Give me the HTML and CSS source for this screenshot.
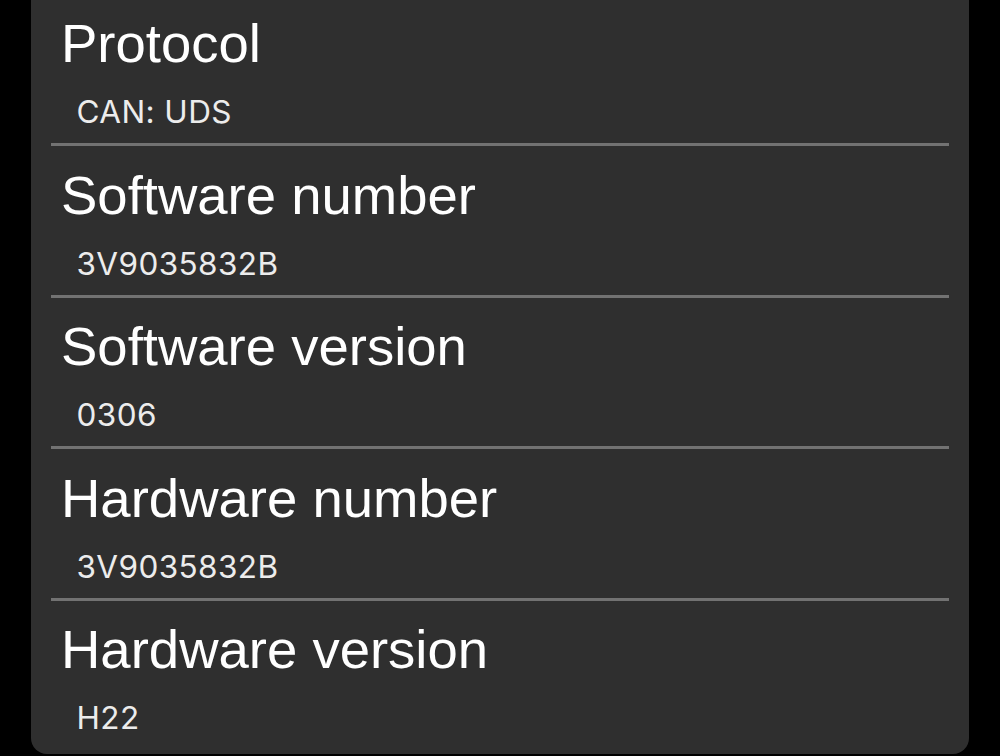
FILE: index.html
```html
<!DOCTYPE html>
<html lang="en">
<head>
<meta charset="utf-8">
<title>ECU info</title>
<link rel="stylesheet" href="styles.css">
</head>
<body>
<div class="card">
  <div class="row">
    <div class="title">Protocol</div>
    <div class="value">CAN: UDS</div>
  </div>
  <div class="row">
    <div class="title">Software number</div>
    <div class="value">3V9035832B</div>
  </div>
  <div class="row">
    <div class="title">Software version</div>
    <div class="value">0306</div>
  </div>
  <div class="row">
    <div class="title">Hardware number</div>
    <div class="value">3V9035832B</div>
  </div>
  <div class="row">
    <div class="title">Hardware version</div>
    <div class="value">H22</div>
  </div>
</div>
</body>
</html>
```
FILE: styles.css
```css
html, body {
  margin: 0;
  padding: 0;
  background: #000;
  height: 756px;
  overflow: hidden;
}
.card {
  margin: 0 31px;
  background: #2f2f2f;
  border-radius: 0 0 16px 16px;
  display: flex;
  flex-direction: column;
}
.row {
  margin: 0 20px;
  padding: 18.5px 0 13px;
  border-bottom: 3px solid #727272;
  display: flex;
  flex-direction: column;
  gap: 18px;
}
.row:first-child {
  padding-top: 13px;
}
.row:last-child {
  border-bottom: none;
  padding-bottom: 18px;
}
.title {
  font-family: "Liberation Sans", Arial, sans-serif;
  font-size: 54.5px;
  line-height: 62px;
  color: #ffffff;
  padding-left: 10px;
  white-space: nowrap;
}
.value {
  font-family: Inter, "Liberation Sans", sans-serif;
  font-size: 31.5px;
  font-weight: 400;
  letter-spacing: 0.4px;
  line-height: 37px;
  color: #ececec;
  padding-left: 25.5px;
  white-space: nowrap;
}
```
